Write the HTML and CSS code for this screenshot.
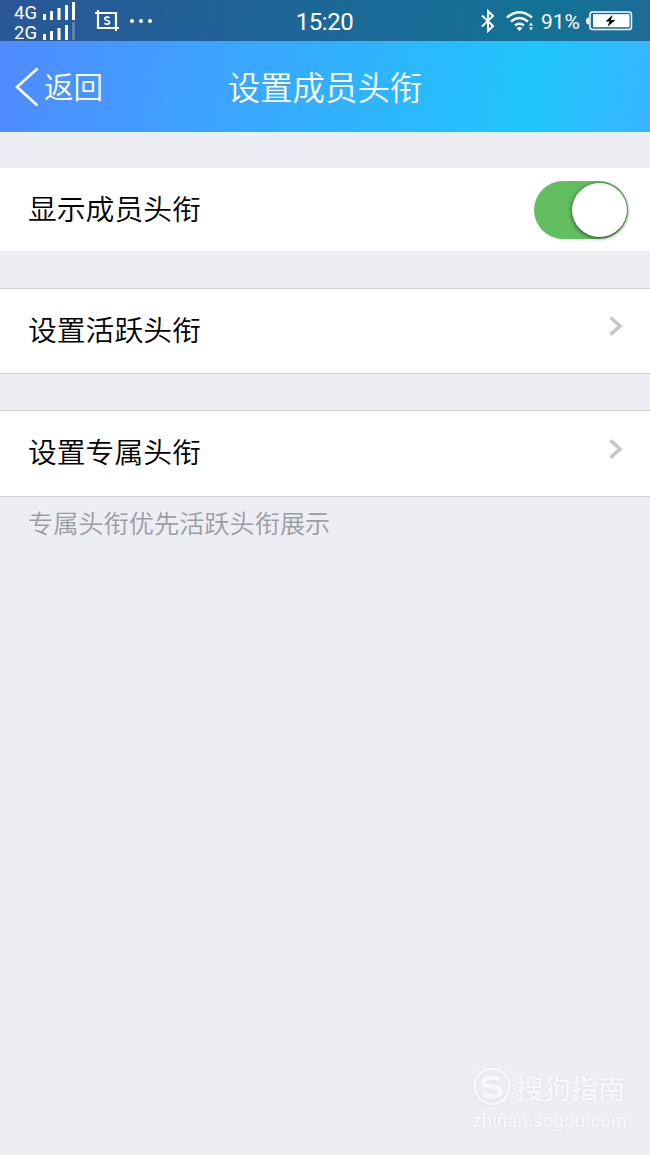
FILE: index.html
```html
<!DOCTYPE html>
<html lang="zh-CN">
  <head>
    <meta charset="UTF-8" />
    <meta name="viewport" content="width=device-width, initial-scale=1.0" />
    <title>设置成员头衔</title>
    <link rel="stylesheet" href="styles.css">
  </head>
  <body>
    <header class="header">
      <div class="status-bar">
        <div class="status-left">
          <div class="signals">
            <div class="signal">
              <span>4G</span>
              <svg width="33" height="18" viewBox="0 0 33 18" fill="#fff">
                <rect x="0" y="12" width="3" height="6" />
                <rect x="7" y="9" width="3" height="9" />
                <rect x="14.5" y="6" width="3" height="12" />
                <rect x="22" y="3" width="3" height="15" />
                <rect x="29" y="0" width="3" height="18" />
              </svg>
            </div>
            <div class="signal">
              <span>2G</span>
              <svg width="33" height="18" viewBox="0 0 33 18" fill="#fff">
                <rect x="0" y="12" width="3" height="6" />
                <rect x="7" y="9" width="3" height="9" />
                <rect x="14.5" y="6" width="3" height="12" />
                <rect x="22" y="3" width="3" height="15" />
                <rect x="29" y="0" width="3" height="18" opacity="0.25" />
              </svg>
            </div>
          </div>
          <svg class="crop-icon" width="24" height="22" viewBox="0 0 24 22" fill="none" stroke="#fff" stroke-width="2.200">
            <path d="M0 3h21v18M3 0v18h21" />
            <path d="M14.500 7.800C13.700 6.800 9.800 6.500 9.800 8.800C9.800 11.200 14.600 9.800 14.600 12.400C14.600 14.700 10.400 14.500 9.400 13.200" stroke-width="1.700" />
          </svg>
          <svg width="22" height="4" viewBox="0 0 22 4" fill="#fff">
            <circle cx="2" cy="2" r="2" />
            <circle cx="11" cy="2" r="2" />
            <circle cx="20" cy="2" r="2" />
          </svg>
        </div>
        <span class="time">15:20</span>
        <div class="status-right">
          <svg width="14" height="24" viewBox="0 0 14 24" fill="none" stroke="#fff" stroke-width="2">
            <path d="M1 6.500L12 17L7 22V2L12 7L1 17.500" />
          </svg>
          <svg class="wifi-icon" width="28" height="20" viewBox="0 0 28 20" fill="none" stroke="#fff" stroke-width="2.400">
            <path d="M1 6.500Q13.500 -4 26 6.500" />
            <path d="M5 10.700Q13.500 3.500 22 10.700" />
            <path d="M9 14.500Q13.500 11 18 14.500" />
            <path d="M10.500 17Q13.500 15 16.500 17L13.500 20Z" fill="#fff" stroke="none" />
            <path d="M23 14.500l2-3 2 3zM23 16.500l2 3 2-3z" fill="#fff" stroke="none" />
          </svg>
          <span class="percent">91%</span>
          <svg width="47" height="20" viewBox="0 0 47 20">
            <path d="M3 6.500Q0 6.500 0 10T3 13.500Z" fill="#fff" />
            <rect x="4" y="1" width="41.500" height="17.500" rx="2.500" fill="none" stroke="#fff" stroke-width="1.500" />
            <rect x="7" y="3.200" width="36.500" height="13" fill="#fff" />
            <path d="M26.500 4L19.500 10.500H23.500L21.500 15.500L29.500 9H25Z" fill="#000" />
          </svg>
        </div>
      </div>
      <nav class="nav-bar">
        <a class="back">
          <svg width="24" height="40" viewBox="0 0 24 40" fill="none" stroke="#fff" stroke-width="2.600">
            <path d="M22.500 1.500L2 20L22.500 38.500" />
          </svg>
          <span>返回</span>
        </a>
        <h1 class="title">设置成员头衔</h1>
      </nav>
    </header>

    <main>
      <div class="cell cell-switch">
        <span>显示成员头衔</span>
        <div class="switch"><div class="knob"></div></div>
      </div>
      <div class="cell cell-link">
        <span>设置活跃头衔</span>
        <svg class="arrow" width="14" height="20" viewBox="0 0 14 20" fill="none" stroke="#c7c7c7" stroke-width="3.600">
          <path d="M1.500 1.500L11 10L1.500 18.500" />
        </svg>
      </div>
      <div class="cell cell-link">
        <span>设置专属头衔</span>
        <svg class="arrow" width="14" height="20" viewBox="0 0 14 20" fill="none" stroke="#c7c7c7" stroke-width="3.600">
          <path d="M1.500 1.500L11 10L1.500 18.500" />
        </svg>
      </div>
      <p class="note">专属头衔优先活跃头衔展示</p>
    </main>

    <footer class="watermark">
      <div class="brand">
        <svg width="40" height="40" viewBox="0 0 40 40" fill="none" stroke="#f8f8fa">
          <path d="M31 33A17.500 17.500 0 1 1 35 28.500L31 34L35 33" stroke-width="2.500" />
          <path d="M28 12.500C22 10 11 10 11 15.500C11 21 29 18 29 24.500C29 30 17 30 11 27" stroke-width="5" />
        </svg>
        <span>搜狗指南</span>
      </div>
      <div class="site">zhinan.sogou.com</div>
    </footer>
  </body>
</html>
```
FILE: styles.css
```css
* {
  box-sizing: border-box;
}

body {
  margin: 0;
  height: 1155px;
  display: flex;
  flex-direction: column;
  background-color: #edeef3;
  font-family: "Noto Sans CJK SC", sans-serif;
  font-weight: 350;
  color: #000;
}

svg {
  display: block;
  flex: none;
}

.header {
  height: 132px;
  background: linear-gradient(100deg, #5189ff 0%, #3da3ff 33%, #20c5fc 82%, #38b5ff 100%);
  color: #fff;
}

.status-bar {
  height: 41px;
  padding: 0 17px 0 14px;
  display: grid;
  grid-template-columns: 1fr auto 1fr;
  align-items: center;
  background-color: rgba(10, 45, 65, 0.55);
  font-family: Roboto, sans-serif;
  font-weight: 400;
}

.status-left,
.status-right {
  display: flex;
  align-items: center;
}

.status-right {
  justify-content: flex-end;
}

.signals {
  padding-top: 1px;
}

.signal {
  display: flex;
  align-items: center;
  gap: 6px;
  height: 20px;
  font-size: 18.5px;
  line-height: 20px;
}

.signal span {
  width: 23px;
  padding-top: 3px;
}

.crop-icon {
  margin: 0 11px 0 19px;
}

.time {
  font-size: 24px;
  line-height: 28px;
  letter-spacing: -0.5px;
  padding: 2px 0 0 2px;
}

.wifi-icon {
  margin-left: 11px;
}

.percent {
  margin: 2px 6px 0 7px;
  font-size: 21px;
}

.nav-bar {
  height: 91px;
  padding: 0 15px;
  display: grid;
  grid-template-columns: 1fr auto 1fr;
  align-items: center;
}

.back {
  display: flex;
  align-items: center;
  gap: 5px;
  font-size: 29.5px;
}

.back span {
  padding-bottom: 4px;
}

.title {
  margin: 0;
  padding-bottom: 3px;
  font-size: 32.4px;
  font-weight: 350;
}

.cell {
  display: flex;
  align-items: center;
  justify-content: space-between;
  padding: 0 28px;
  background-color: #fff;
  font-size: 28.8px;
}

.cell span {
  padding-bottom: 4px;
}

.cell-switch {
  height: 83px;
  margin: 36px 0 37px;
  padding-right: 22px;
}

.cell-link {
  height: 86px;
  margin-bottom: 36px;
  border-top: 1px solid #d0d1d4;
  border-bottom: 1px solid #d0d1d4;
}

.cell-link span {
  padding-bottom: 6px;
}

.cell-link:last-of-type {
  height: 87px;
  margin-bottom: 0;
}

.arrow {
  margin: 0 -1px 10px 0;
}

.switch {
  width: 94px;
  height: 58px;
  padding: 2px 1px;
  display: flex;
  justify-content: flex-end;
  border-radius: 29px;
  background-color: #62be60;
}

.knob {
  width: 55px;
  height: 54px;
  border-radius: 50%;
  background-color: #fff;
  box-shadow: 0 1px 4px rgba(0, 0, 0, 0.65);
}

.note {
  margin: 7px 28px;
  font-size: 25.2px;
  color: #9c9da1;
}

.watermark {
  width: 156px;
  margin: auto 22px 22px auto;
  color: #f8f8fa;
  font-weight: 500;
}

.brand {
  display: flex;
  align-items: center;
  gap: 4px;
  font-size: 27.3px;
  line-height: 40px;
  text-shadow: 0 0 2px #d8d9de;
}

.brand svg {
  filter: drop-shadow(0 0 1px #d8d9de);
}

.site {
  margin-top: 2px;
  font-family: Roboto, sans-serif;
  font-size: 18.8px;
  line-height: 24px;
  text-shadow: 0 0 2px #d8d9de;
}
```
